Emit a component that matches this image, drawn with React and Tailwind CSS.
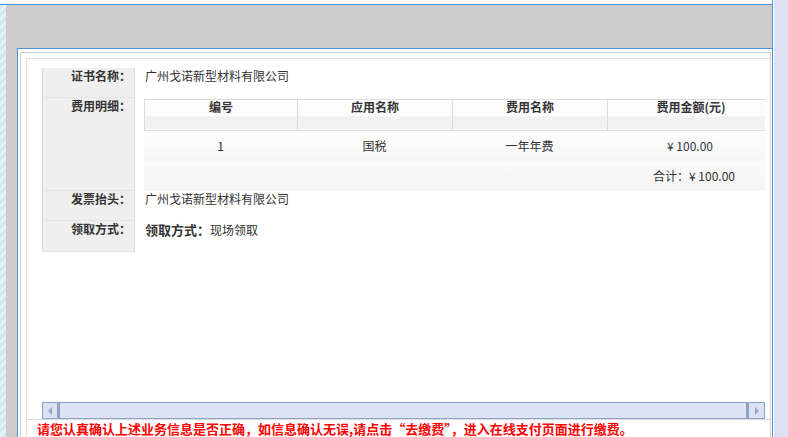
const font = { fontFamily: '"Noto Sans CJK SC", "Liberation Sans", sans-serif' }

const rows = [
  { label: '证书名称：', h: 'h-[30px]', value: '广州戈诺新型材料有限公司' },
  { label: '费用明细：', fee: true },
  { label: '发票抬头：', h: 'h-[30px]', value: '广州戈诺新型材料有限公司' },
  { label: '领取方式：', h: 'h-[31px]', pickup: true },
]

const cols = [
  { title: '编号', w: 'w-[153px]', value: '1' },
  { title: '应用名称', w: 'w-[155px]', value: '国税' },
  { title: '费用名称', w: 'w-[155px]', value: '一年年费' },
  { title: '费用金额(元)', w: 'w-[166px]', value: '¥ 100.00' },
]

function FeeTable() {
  return (
    <div className="w-[629px] pt-[1px]">
      <div className="flex h-[32px] border border-[#dcdcdc] bg-[linear-gradient(#fdfdfd_0%,#fbfbfb_54%,#f1f1f1_56%,#f2f2f2_88%,#f7f7f7_100%)]">
        {cols.map((c, i) => (
          <div
            key={c.title}
            className={`${c.w} shrink-0 text-center font-bold text-[12px] leading-[14px] text-[#333] ${i < 3 ? 'border-r border-[#dcdcdc]' : ''}`}
          >
            {c.title}
          </div>
        ))}
      </div>
      <div className="flex h-[30px] items-center bg-[linear-gradient(#fefefe,#f6f6f6)]">
        {cols.map((c) => (
          <div key={c.title} className={`${c.w} shrink-0 text-center text-[12px] text-[#333]`}>
            {c.value}
          </div>
        ))}
      </div>
      <div className="flex h-[30px] items-center justify-end pr-[38px] bg-[linear-gradient(#fbfbfb,#f4f4f4)] text-[12px] text-[#333]">
        合计：¥ 100.00
      </div>
    </div>
  )
}

function InfoGrid() {
  return (
    <div className="grid grid-cols-[93px_638px] w-[731px]">
      {rows.map((r) => (
        <div key={r.label} className="contents">
          <div
            className={`${r.h || ''} border-x border-b border-x-[#dadada] border-b-[#e4e4e4] bg-[#efefef] text-right pr-[3px] text-[12px] leading-[16px] font-bold text-[#333]`}
          >
            {r.label}
          </div>
          <div className={`${r.h || ''} ${r.fee ? 'pl-[9px]' : 'pl-[10px]'} text-[12px] leading-[16px] text-[#333]`}>
            {r.fee ? (
              <FeeTable />
            ) : r.pickup ? (
              <span className="inline-block pt-[1px]">
                <b className="text-[13px]">领取方式：</b>现场领取
              </span>
            ) : (
              r.value
            )}
          </div>
        </div>
      ))}
    </div>
  )
}

function ScrollBar() {
  return (
    <div className="ml-[15px] flex h-[17px] w-[723px] bg-[#dde3f4]">
      <div className="flex w-[17px] items-center justify-center border border-[#8fa3c8] border-r-2 bg-[#dbe2f3]">
        <span className="h-0 w-0 border-y-[4px] border-r-[4px] border-y-transparent border-r-[#98a6c2]" />
      </div>
      <div className="flex-1 border border-[#8fa3c8] border-r-2 bg-[#dce3f4]" />
      <div className="flex w-[17px] items-center justify-center border border-[#8fa3c8] bg-[#dbe2f3]">
        <span className="h-0 w-0 border-y-[4px] border-l-[4px] border-y-transparent border-l-[#98a6c2]" />
      </div>
    </div>
  )
}

export default function App() {
  return (
    <div style={font} className="flex h-[437px] w-[788px] overflow-hidden bg-white">
      <div className="flex w-[773px] flex-col border-r border-[#4b93db]">
        <div className="h-[5px] shrink-0 border-b border-[#4b93db] bg-white" />
        <div className="flex min-h-0 flex-1">
          <div className="w-[6px] bg-[repeating-linear-gradient(135deg,#d3e7f7_0px,#d3e7f7_3px,#e6f2fb_3px,#e6f2fb_6px)]" />
          <div className="flex min-w-0 flex-1 flex-col bg-[#cccccc]">
            <div className="h-[43px] shrink-0" />
            <div className="ml-[11px] flex min-h-0 flex-1 flex-col border-l border-t border-[#4b93db] bg-white pl-[2px] pr-[1px] pt-[3px]">
              <div className="flex min-h-0 flex-1 flex-col border-l border-r border-t border-[#d2d2d2] pl-[5px] pt-[5px]">
                <div className="flex min-h-0 flex-1 flex-col border-l border-t border-[#e2e2e2]">
                  <div className="min-h-0 flex-1 overflow-hidden pl-[15px] pt-[8px]">
                    <div className="mt-[1px] w-[723px] overflow-hidden">
                      <InfoGrid />
                    </div>
                  </div>
                  <ScrollBar />
                  <div className="h-[18px] shrink-0 border-t border-[#dcdcdc] pl-[10px] text-[13px] font-bold leading-[17px] text-[#ff0000]">
                    请您认真确认上述业务信息是否正确，如信息确认无误,请点击“去缴费”，进入在线支付页面进行缴费。
                  </div>
                </div>
              </div>
            </div>
          </div>
        </div>
      </div>
      <div className="flex-1 border-l border-white bg-[#dce2f4]" />
    </div>
  )
}
